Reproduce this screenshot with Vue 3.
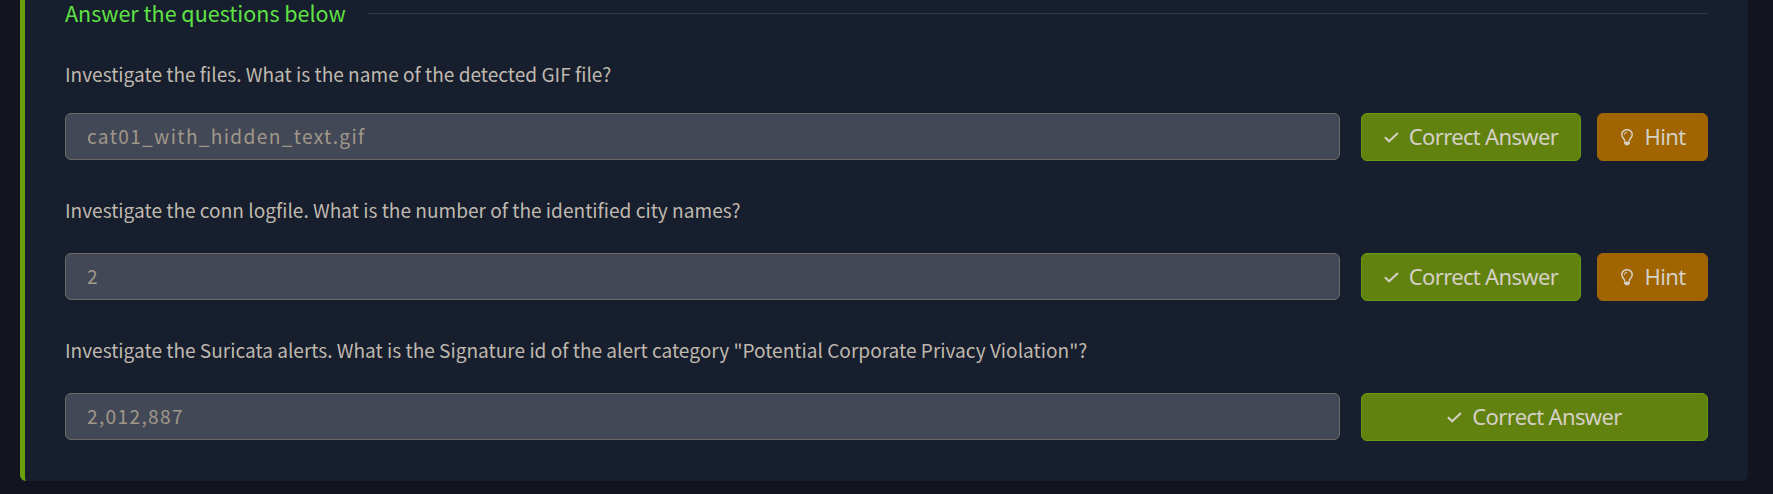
<script setup>
const questions = [
  { text: 'Investigate the files. What is the name of the detected GIF file?', answer: 'cat01_with_hidden_text.gif', hint: true, key: 'a' },
  { text: 'Investigate the conn logfile. What is the number of the identified city names?', answer: '2', hint: true, key: 'b' },
  { text: 'Investigate the Suricata alerts. What is the Signature id of the alert category "Potential Corporate Privacy Violation"?', answer: '2,012,887', hint: false, key: 'c' },
]
</script>

<template>
  <main class="page">
    <section class="panel">
      <header class="heading">
        <h2>Answer the questions below</h2>
        <div class="rule"></div>
      </header>
      <div v-for="q in questions" :key="q.key" class="question">
        <p>{{ q.text }}</p>
        <div class="row">
          <div class="field">{{ q.answer }}</div>
          <div class="actions">
            <button class="btn correct" type="button">
              <svg class="check" width="15" height="11" viewBox="0 0 15 11"><path d="M.9 5.3 5.1 9.3 13.9 1" /></svg>
              <span class="label">Correct Answer</span>
            </button>
            <button v-if="q.hint" class="btn hint" type="button">
              <svg class="bulb" width="12" height="17" viewBox="0 0 12 17">
                <path class="line" d="M3.7 12.2C3.7 9.7.8 8.8.8 5.7a5.2 5 0 0 1 10.4 0c0 3.1-2.9 4-2.9 6.5" />
                <path class="line thin" d="M3.3 5.8A2.7 2.6 0 0 1 6 3.2" />
                <path class="base" d="M3.1 12.4h5.8v2L7.4 16.2H4.6L3.1 14.4Z" />
              </svg>
              <span class="label">Hint</span>
            </button>
          </div>
        </div>
      </div>
    </section>
  </main>
</template>

<style>
body { background: #12151f; }
</style>

<style scoped>
.page {
  box-sizing: border-box;
  height: 494px;
  padding: 0 25px 13px 20px;
  background: #12151f;
  font-family: "Noto Sans CJK SC", "Noto Sans", sans-serif;
}
.panel {
  box-sizing: border-box;
  height: 481px;
  padding: 0 40px;
  border-left: 5px solid #6b9f0c;
  border-radius: 0 0 6px 6px;
  background: #171e2d;
}
.heading {
  display: flex;
  align-items: center;
  height: 27px;
}
h2 {
  box-sizing: border-box;
  margin: 0;
  width: 302px;
  height: 27px;
  flex: none;
  font-size: 21.5px;
  font-weight: 400;
  line-height: 25px;
  color: #5fe244;
  white-space: nowrap;
}
.rule { flex: 1; height: 1px; background: #313746; }
.question { height: 140px; }
p {
  box-sizing: border-box;
  height: 86px;
  margin: 0;
  padding-top: 29px;
  font-size: 19.09px;
  line-height: 28px;
  color: #bfb8ae;
  white-space: nowrap;
}
.question:nth-of-type(1) p { padding-top: 33px; }
.row { display: flex; gap: 21px; }
.field {
  box-sizing: border-box;
  flex: 1;
  height: 47px;
  padding: 0 21px;
  border: 1px solid #6f6a65;
  border-radius: 6px;
  background: #434857;
  color: #a0978a;
  font-size: 19.08px;
  line-height: 44px;
  letter-spacing: 1.35px;
}
.actions { display: flex; gap: 16px; width: 347px; }
.btn {
  box-sizing: border-box;
  display: flex;
  align-items: center;
  justify-content: center;
  height: 48px;
  padding: 0;
  border: 1px solid;
  border-radius: 6px;
  color: #d5d0c5;
  font-family: "Noto Sans", sans-serif;
  font-size: 22px;
  line-height: 44px;
  white-space: nowrap;
}
.label { height: 46px; }
.correct { flex: 1; gap: 10px; border-color: #689c0c; background: #62820f; }
.hint { width: 111px; gap: 11px; padding-left: 2px; border-color: #a06606; background: #a06400; }
.hint .label { letter-spacing: -0.6px; }
.correct .label { letter-spacing: -0.66px; }
.check, .check path, .line { fill: none; stroke: #d5d0c5; stroke-width: 2; }
.line { stroke-width: 1.5; }
.thin { stroke-width: 1; }
.base { fill: #d5d0c5; }
</style>
